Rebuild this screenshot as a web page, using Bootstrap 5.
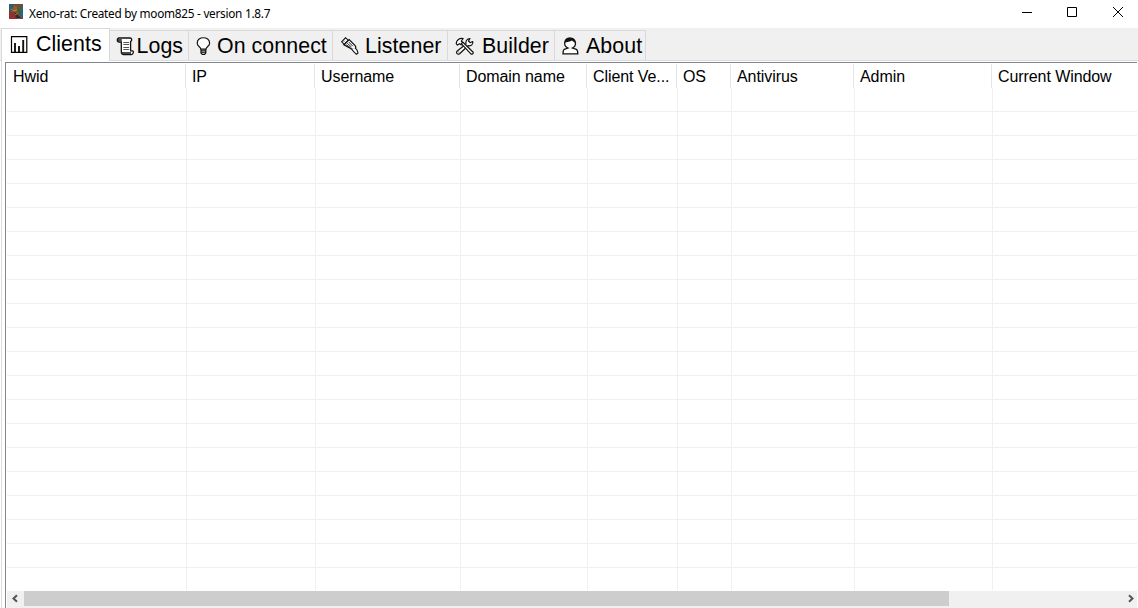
<!DOCTYPE html>
<html lang="en">
<head>
<meta charset="utf-8">
<meta name="viewport" content="width=device-width, initial-scale=1">
<title>Xeno-rat</title>
<link href="https://cdn.jsdelivr.net/npm/bootstrap@5.3.0/dist/css/bootstrap.min.css" rel="stylesheet">
<style>
body{height:608px;width:1138px;font-family:"Liberation Sans",Arial,sans-serif;color:#000;background:#fff}
.titlebar{height:28px;padding-left:9px}
.title-text{font:11.8px/26px "Noto Sans","Open Sans",sans-serif;margin-left:6px;letter-spacing:-.27px;white-space:pre}
.win-btns{height:25px;margin-right:4px}
.tabs{height:33px;background:#f0f0f0;border-bottom:1px solid #dcdcdc;padding-left:1px}
.tab{height:30px;margin-top:2px;border-top:1px solid #d9d9d9;border-right:1px solid #d9d9d9;font-size:21.33px;letter-spacing:.08px;line-height:30px;white-space:pre;border-radius:0;color:#000}
.tab svg{flex:none;margin-top:5px;width:20px;height:20px}
.tab.current{height:33px;margin:0 0 -1px;background:#fff;border-left:1px solid #d9d9d9;line-height:31px}
.pane{border-left:1px solid #dcdcdc;margin-left:1px;padding:1px 1px 0 3px}
.frame{border:1px solid #828790;border-right:0;border-bottom:0;padding-left:1px}
.heads{height:25px;padding-top:1px;font-size:16px;line-height:25px;letter-spacing:-.08px}
.cell{flex:none;white-space:nowrap}
.heads .cell{padding-left:6px;border-right:1px solid #e5e5e5}
.heads .cell:last-child,.grid-row .cell:last-child{border-right:0;flex:1 1 0}
.grid-row{height:24px;border-bottom:1px solid #f0f0f0}
.grid-row .cell{border-right:1px solid #f0f0f0}
.grid-row.tail{height:22px;border-bottom:0}
.w1{width:180px}.heads .w1{width:179px}.w2{width:129px}.w3{width:145px}.w4{width:127px}.w5{width:90px}.w6{width:54px}.w7{width:123px}.w8{width:138px}
.scroll{height:17px;background:#f0f0f0;margin-top:1px}
.thumb{width:925px;height:15px;background:#cdcdcd}
</style>
</head>
<body class="overflow-hidden d-flex flex-column">
<header class="titlebar d-flex align-items-start">
  <svg width="14" height="15" viewBox="0 0 14 15" style="margin-top:4px">
    <path fill="#70502d" d="M0 0h14v15H0z"/><path fill="#2c6263" d="M0 0h6L4 7H0z"/><path fill="#316080" d="M11 2l3 1v9l-3 3z"/>
    <path fill="#952e30" d="M0 7l6 3 2 5H0z"/><path fill="#ac5131" d="M5 1l5 3-4 5-2-4z"/><path fill="#44632f" d="M8 3l4 2-1 6-3-3z"/><path fill="#302740" d="M5 8l3 2 4 4H7z"/><path d="M2 5l3 2 3-1M6 11l3-2" stroke="#ba843b" fill="none"/>
  </svg>
  <span class="title-text">Xeno-rat: Created by moom825 - version 1.8.7</span>
  <div class="win-btns ms-auto">
    <svg width="113" height="25" viewBox="0 0 113 25" class="d-block" fill="none" stroke="#000"><path d="M1 12.5h10M46.5 7.5h9v9h-9z"/><path d="M92 7l10 10M102 7L92 17"/></svg>
  </div>
</header>
<nav class="tabs d-flex align-items-start">
  <div class="tab current d-flex" style="width:109px;padding-left:7px"><svg viewBox="0 0 20 20" style="margin-top:6px"><path d="M2.5 1.7h15.3v15.6H2.5z" fill="#fff" stroke="#000" stroke-width="1.2"/><path d="M6 17V8M10 17v-6M14.2 17V5" stroke="#111" stroke-width="1.9"/></svg><span style="margin-left:7px">Clients</span></div>
  <div class="tab d-flex" style="width:79px;padding-left:6px"><svg viewBox="0 0 20 20"><path d="M4 2h10c2 0 2.4 3 .6 3.3v9.5h1.8c1.7 0 1 3.8-1 3.8H7.5c-2.4 0-2.2-2.4-2.2-4V6H3C.8 6 .7 2 3 2z" fill="#fff" stroke="#111" stroke-width="1.3"/><path d="M1.8 4h4M6 17h9" stroke="#111" stroke-width="1.4"/><path d="M7.3 6.5h5.8M7.3 8.5h5.8M7.3 11.5h5.8M7.3 13.5h5.8" stroke="#555" stroke-width="1"/></svg><span style="margin-left:.5px">Logs</span></div>
  <div class="tab d-flex" style="width:144px;padding-left:4px"><svg viewBox="0 0 20 20"><path d="M7.8 13C7.8 11 4.2 10.2 4.2 7.2c0-7.3 12.4-7.3 12.4 0 0 3-3.6 3.8-3.6 5.8z" fill="#fff" stroke="#111" stroke-width="1.2"/><path d="M8 14.2h4.8M8 16.2h4.8M9 18.3h2.8M8 13v4l1.2 1.4M12.8 13v4l-1.2 1.4" fill="none" stroke="#111" stroke-width="1.2"/></svg><span style="margin-left:4px">On connect</span></div>
  <div class="tab d-flex" style="width:115px;padding-left:7px"><svg viewBox="0 0 20 20"><path d="M1.6 5.8l3.9-4 2.8 2.4-4 4.2z" fill="#fff" stroke="#111" stroke-width="1.1"/><path d="M4 8.8l5.2-5.2 5.9 6c1.4 1.8.3 3.4-1 3.7-1.5.4-2.7-.1-3.4-.8z" fill="#fff" stroke="#111" stroke-width="1.3"/><path d="M6.2 8.8l4.3 2.9M7.3 7.3l4.2 3.7M8.8 6l4 4.2M3.8 5.7l.9-.9" stroke="#111" stroke-width=".9"/><path d="M11.7 13.2l1.8 2.3 2.9 2.8 1.6-1.3-1-3-2-2.2" fill="#fff" stroke="#111" stroke-width="1.1"/></svg><span style="margin-left:5px">Listener</span></div>
  <div class="tab d-flex" style="width:107px;padding-left:7px"><svg viewBox="0 0 20 20"><g stroke="#111" fill="#fff" stroke-width="1.2" stroke-linejoin="round"><path d="M2 15.2l9-7.2c-.7-2.8 1-5.4 4-5.5L13.5 5l1.6 1.7 2.6-1.2c.8 2.7-1.6 5-4.6 4.2l-8.5 8c-2 1.5-4-.7-2.6-2.5z"/><path d="M1.2 7.5c.2-3 3.2-6 7-5L6.3 5l1.8 2-1.8 1.8-1.9-1.1-2 1.4z"/><path d="M6.2 7.7l1.7-1.4 10.3 10c.3 1.5-1.2 2.3-2.3 1.6z"/></g><path d="M3.5 16h.7" stroke="#111"/></svg><span style="margin-left:7px">Builder</span></div>
  <div class="tab d-flex" style="width:91px;padding-left:5px"><svg viewBox="0 0 20 20"><path d="M8 12C2.8 10 3.8 2.4 10 2.2c6.4.2 7.2 7.8 2.4 9.8l4 1.3c1.3.6 1.4 2.8 1.4 4.6H3c0-1.8.2-4 1.3-4.6z" fill="#fff" stroke="#111" stroke-width="1.3"/><path d="M4.8 6.6C4.8 3 7.3 1.5 10.3 1.7c3.5.2 5.4 2.5 4.7 5.1-1.2-.6-2-1.2-3-2.2-2 1.2-4.5 1.6-7.2 2z" fill="#111"/></svg><span style="margin-left:6px">About</span></div>
</nav>
<main class="pane flex-grow-1">
  <div class="frame h-100">
    <div class="heads d-flex">
      <div class="cell w1">Hwid</div><div class="cell w2">IP</div><div class="cell w3">Username</div><div class="cell w4">Domain name</div><div class="cell w5">Client Ve...</div><div class="cell w6">OS</div><div class="cell w7">Antivirus</div><div class="cell w8">Admin</div><div class="cell">Current Window</div>
    </div>
    <div id="rows"></div>
    <div class="scroll d-flex">
      <svg width="17" height="17" viewBox="0 0 17 17" fill="none" stroke="#555" stroke-width="2"><path d="M10 4.2L6.5 7.5l3.5 3.3"/></svg>
      <div class="thumb"></div>
      <svg class="ms-auto" width="17" height="17" viewBox="0 0 17 17" fill="none" stroke="#555" stroke-width="2"><path d="M9 4.2l3.5 3.3L9 10.8"/></svg>
    </div>
  </div>
</main>
<script src="https://cdn.jsdelivr.net/npm/bootstrap@5.3.0/dist/js/bootstrap.bundle.min.js"></script>
<script>
const cells = [1,2,3,4,5,6,7,8].map(n => `<div class="cell w${n}"></div>`).join('') + '<div class="cell"></div>';
document.getElementById('rows').innerHTML =
  `<div class="grid-row d-flex">${cells}</div>`.repeat(20) + `<div class="grid-row tail d-flex">${cells}</div>`;
</script>
</body>
</html>
